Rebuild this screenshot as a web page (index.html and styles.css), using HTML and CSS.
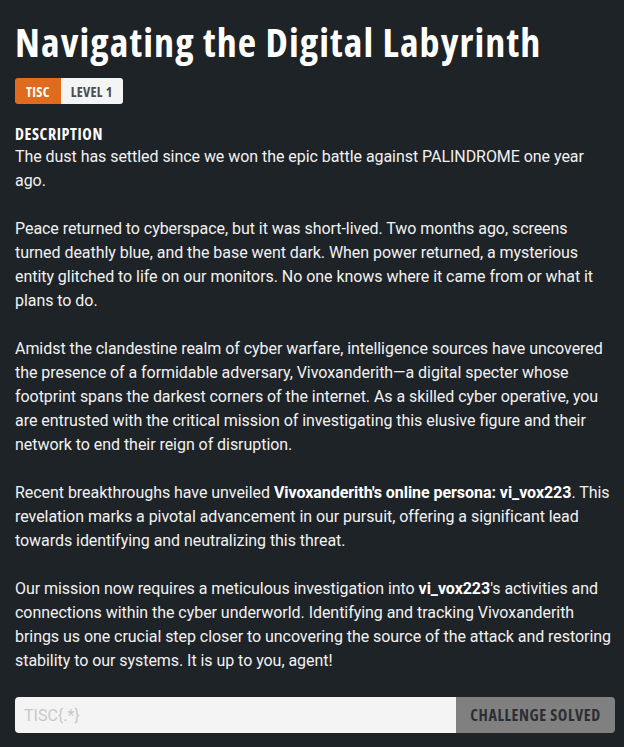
FILE: index.html
```html
<!DOCTYPE html>
<html>
<head>
<meta charset="utf-8">
<link rel="stylesheet" href="styles.css">
</head>
<body>
<main class="challenge">
  <h1 class="title">Navigating the Digital Labyrinth</h1>
  <div class="badges">
    <span class="badge badge-cat">TISC</span><span class="badge badge-level">LEVEL 1</span>
  </div>
  <h2 class="section-label">DESCRIPTION</h2>
  <div class="description">
    <p>The dust has settled since we won the epic battle against PALINDROME one year ago.</p>
    <p>Peace returned to cyberspace, but it was short-lived. Two months ago, screens turned deathly blue, and the base went dark. When power returned, a mysterious entity glitched to life on our monitors. No one knows where it came from or what it plans to do.</p>
    <p>Amidst the clandestine realm of cyber warfare, intelligence sources have uncovered the presence of a formidable adversary, Vivoxanderith—a digital specter whose footprint spans the darkest corners of the internet. As a skilled cyber operative, you are entrusted with the critical mission of investigating this elusive figure and their network to end their reign of disruption.</p>
    <p>Recent breakthroughs have unveiled <strong>Vivoxanderith's online persona: vi_vox223</strong>. This revelation marks a pivotal advancement in our pursuit, offering a significant lead towards identifying and neutralizing this threat.</p>
    <p>Our mission now requires a meticulous investigation into <strong>vi_vox223</strong>'s activities and connections within the cyber underworld. Identifying and tracking Vivoxanderith brings us one crucial step closer to uncovering the source of the attack and restoring stability to our systems. It is up to you, agent!</p>
  </div>
  <form class="flag-form">
    <input class="flag-input" type="text" placeholder="TISC{.*}">
    <button class="flag-btn" type="button">CHALLENGE SOLVED</button>
  </form>
</main>
</body>
</html>
```
FILE: styles.css
```css
html, body {
  margin: 0;
  padding: 0;
  background: #1e2327;
}
body {
  color: #f2f2f2;
  font-family: Roboto, "Liberation Sans", sans-serif;
}
.challenge {
  padding: 18px 9px 0 15px;
}
.title,
.badge,
.section-label,
.flag-btn {
  font-family: "Open Sans", "DejaVu Sans Condensed", sans-serif;
  font-stretch: 75%;
  font-weight: 700;
}
.title {
  margin: 0;
  font-stretch: 82%;
  font-size: 40px;
  line-height: 48px;
  letter-spacing: 1.1px;
  color: #ffffff;
}
.badges {
  display: flex;
  margin-top: 12px;
}
.badge {
  display: inline-flex;
  align-items: center;
  height: 26px;
  padding: 0 11px;
  font-size: 14px;
  letter-spacing: 0.3px;
}
.badge-cat {
  background: #e06a1e;
  color: #ffffff;
  border-radius: 3px 0 0 3px;
}
.badge-level {
  padding: 0 10px;
  background: #f4f4f4;
  color: #4a4d52;
  border-radius: 0 3px 3px 0;
}
.section-label {
  margin: 20px 0 0;
  font-size: 16px;
  line-height: 21px;
  letter-spacing: 0.6px;
  color: #ffffff;
}
.description {
  font-size: 16px;
  line-height: 24px;
  letter-spacing: -0.05px;
}
.description p {
  margin: 0 0 24px;
}
.description strong {
  font-weight: 700;
  color: #ffffff;
}
.flag-form {
  display: flex;
  height: 36px;
  border-radius: 4px;
  overflow: hidden;
}
.flag-input {
  flex: 1;
  border: 0;
  margin: 0;
  padding: 0 9px;
  background: #f4f4f4;
  font-family: Roboto, sans-serif;
  font-size: 16px;
  color: #333;
  outline: none;
}
.flag-input::placeholder {
  color: #c8c8c8;
}
.flag-btn {
  width: 159px;
  border: 0;
  margin: 0;
  padding: 0;
  background: #808080;
  color: #2b2f33;
  font-size: 16px;
  letter-spacing: 0.6px;
}
```
